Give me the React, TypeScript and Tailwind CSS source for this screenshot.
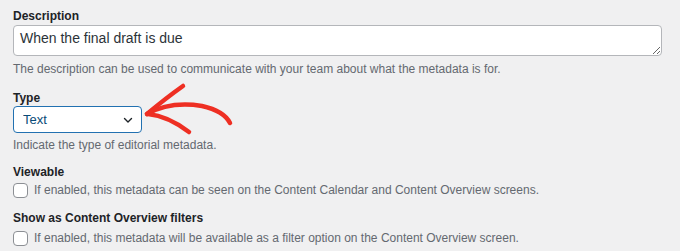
import { useState } from "react";

function ChevronDown() {
  return (
    <svg width="12" height="12" viewBox="0 0 12 12" fill="none">
      <path d="M2.5 4.5L6 8L9.5 4.5" stroke="#1d2327" strokeWidth="1.4" strokeLinecap="round" strokeLinejoin="round" />
    </svg>
  );
}

function Arrow() {
  return (
    <svg
      className="pointer-events-none absolute left-0 top-0"
      width="680"
      height="251"
      viewBox="0 0 680 251"
      fill="none"
    >
      <g stroke="#ee2f23" strokeLinecap="round" strokeLinejoin="round">
        <path d="M183 86 Q166 98 147 114" strokeWidth="4.5" />
        <path d="M147 114 Q170 101 202 106 Q224 111 230 123" strokeWidth="4.5" />
        <path d="M148 114 Q168 116 189 132" strokeWidth="4.5" />
      </g>
    </svg>
  );
}

export default function App() {
  const [description, setDescription] = useState("When the final draft is due");
  const [viewable, setViewable] = useState(false);
  const [filters, setFilters] = useState(false);

  return (
    <div className="relative h-[251px] w-[680px] overflow-hidden bg-[#f0f0f1] pl-[13px] pr-[18px] pt-[8px] font-['Liberation_Sans',Arial,sans-serif] text-[12px] text-[#1d2327]">
      <label className="block leading-[16px] font-semibold">Description</label>
      <textarea
        value={description}
        onChange={(e) => setDescription(e.target.value)}
        className="mt-[1px] block h-[31px] w-full resize-y rounded-[4px] border border-[#b4b6ba] bg-white px-[6px] py-[3px] text-[14px] leading-[18px] text-[#2c3338] outline-none"
      />
      <p className="mt-[5px] leading-[16px] text-[#646970]">
        The description can be used to communicate with your team about what the metadata is for.
      </p>

      <label className="mt-[13px] block leading-[16px] font-semibold">Type</label>
      <div className="relative w-[129px]">
        <select className="block h-[27px] w-full appearance-none rounded-[4px] border border-[#2271b1] bg-white pl-[9px] pr-[24px] text-[13px] text-[#0a4b78] outline-none">
          <option>Text</option>
          <option>Date</option>
          <option>Number</option>
          <option>Checkbox</option>
          <option>User</option>
        </select>
        <span className="pointer-events-none absolute right-[8px] top-[8px]">
          <ChevronDown />
        </span>
      </div>
      <p className="mt-[4px] leading-[16px] text-[#646970]">Indicate the type of editorial metadata.</p>

      <label className="mt-[11px] block leading-[16px] font-semibold">Viewable</label>
      <label className="mt-[2px] flex items-center gap-[6px] leading-[16px] text-[#646970]">
        <input
          type="checkbox"
          checked={viewable}
          onChange={(e) => setViewable(e.target.checked)}
          className="h-[15px] w-[15px] appearance-none rounded-[4px] border border-[#8c8f94] bg-white"
        />
        If enabled, this metadata can be seen on the Content Calendar and Content Overview screens.
      </label>

      <label className="mt-[12px] block leading-[16px] font-semibold">Show as Content Overview filters</label>
      <label className="mt-[4px] flex items-center gap-[6px] leading-[16px] text-[#646970]">
        <input
          type="checkbox"
          checked={filters}
          onChange={(e) => setFilters(e.target.checked)}
          className="h-[15px] w-[15px] appearance-none rounded-[4px] border border-[#8c8f94] bg-white"
        />
        If enabled, this metadata will be available as a filter option on the Content Overview screen.
      </label>

      <Arrow />
    </div>
  );
}
